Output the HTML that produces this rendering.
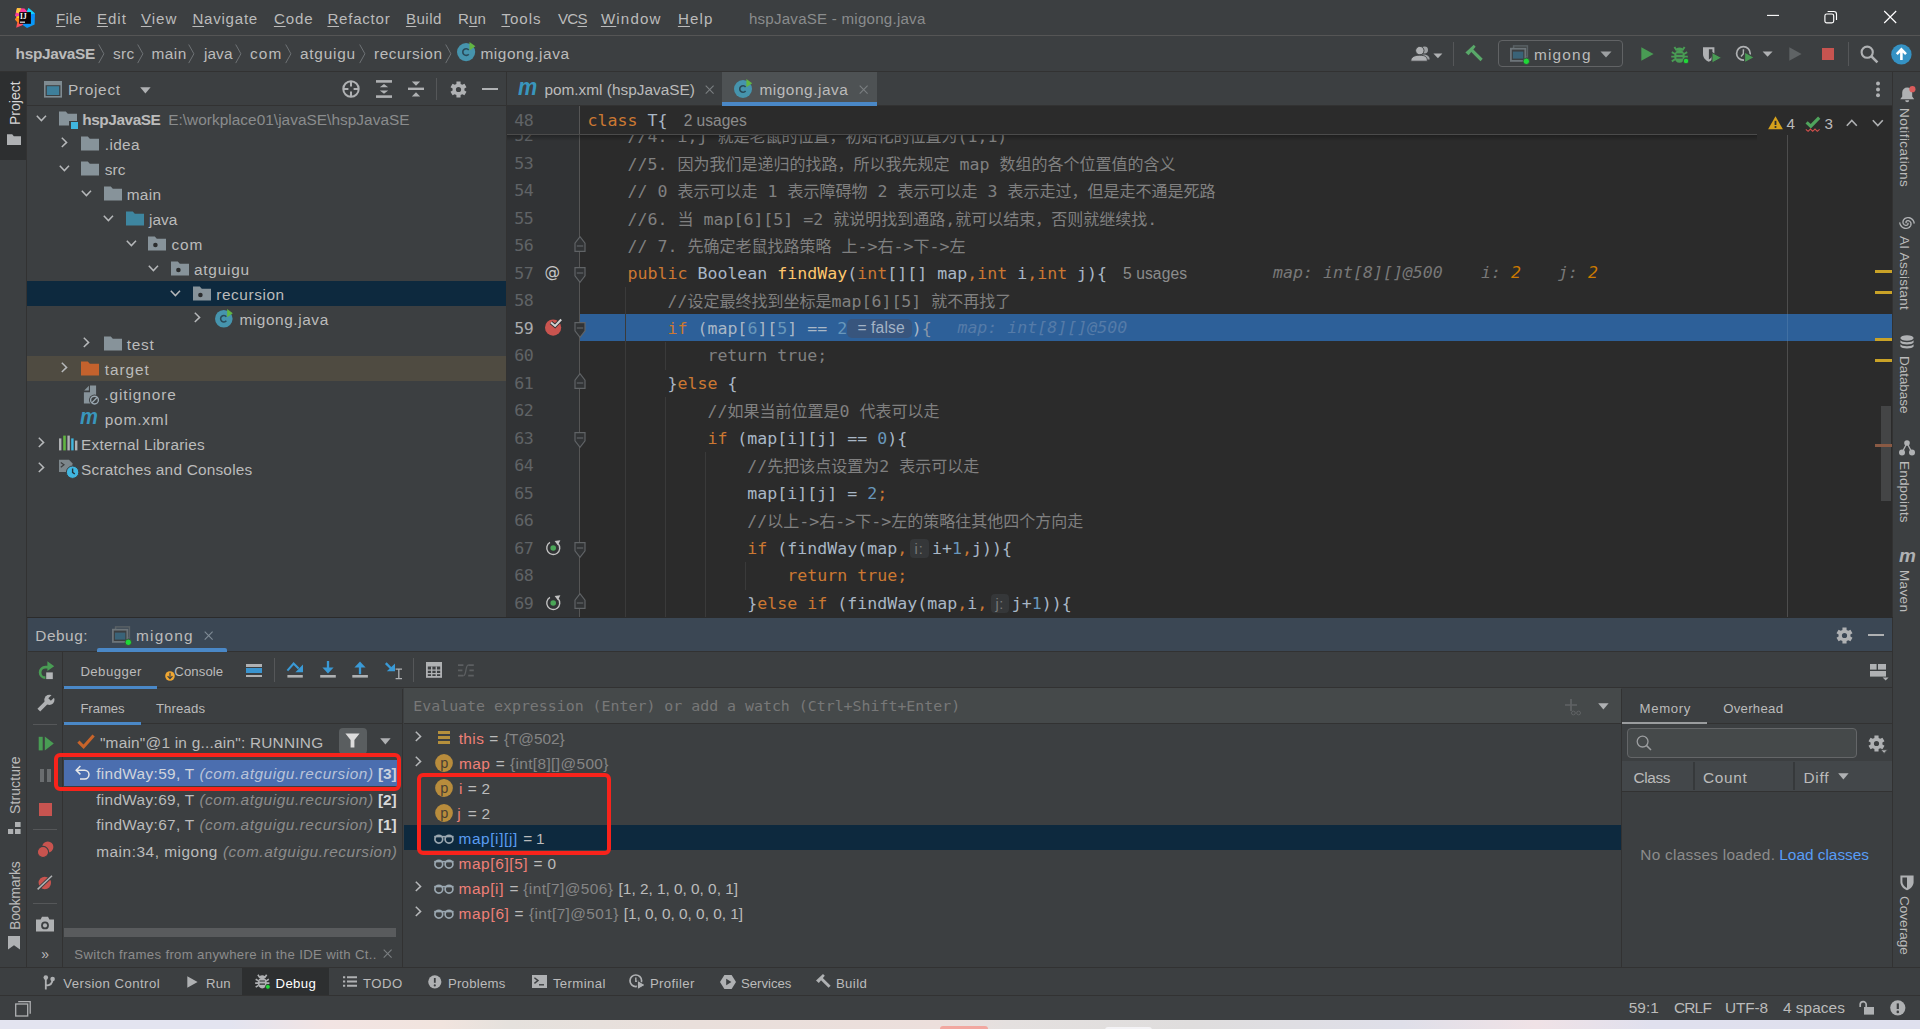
<!DOCTYPE html>
<html lang="zh"><head><meta charset="utf-8"><title>hspJavaSE - migong.java</title><style>
html,body{margin:0;padding:0;background:#3c3f41;}
#root{position:relative;width:1920px;height:1029px;overflow:hidden;background:#3c3f41;font-family:"Liberation Sans","Noto Sans CJK SC",sans-serif;}
.b{position:absolute;}
.t{position:absolute;white-space:pre;font-family:"Liberation Sans","Noto Sans CJK SC",sans-serif;}
.m{font-family:"DejaVu Sans Mono","Liberation Mono","Noto Sans CJK SC",monospace !important;}
.t u{text-decoration:underline;text-decoration-thickness:1px;text-underline-offset:2px;}
.i{position:absolute;overflow:visible;}
.cl{position:absolute;white-space:pre;font-family:"DejaVu Sans Mono","Liberation Mono","Noto Sans CJK SC",monospace;font-size:16.6px;line-height:27.5px;height:27.5px;color:#a9b7c6;left:587.5px;}
.cl .cj{font-size:16px;font-family:"Noto Sans CJK SC",sans-serif;}
.k{color:#cc7832} .n{color:#6897bb} .c{color:#808080} .f{color:#ffc66d} .d{color:#787878}
.ln{position:absolute;white-space:pre;font-family:"DejaVu Sans Mono","Liberation Mono","Noto Sans CJK SC",monospace;font-size:16.6px;line-height:27.5px;height:27.5px;color:#606366;left:514.2px;letter-spacing:-0.5px;}
</style></head><body><div id="root">
<div class="b" style="left:0px;top:35px;width:1920px;height:1px;background:#555555;"></div>
<svg class="i" style="left:14px;top:7px;" width="22" height="22" viewBox="14 7 22 22"><defs><linearGradient id="lgA" x1="0" y1="0" x2="0.3" y2="1"><stop offset="0" stop-color="#fe2d6c"/><stop offset=".45" stop-color="#f53fb0"/><stop offset=".7" stop-color="#fc6a2a"/><stop offset="1" stop-color="#fe3f7a"/></linearGradient><linearGradient id="lgB" x1="0.2" y1="0" x2="0.6" y2="1"><stop offset="0" stop-color="#14c9f8"/><stop offset=".4" stop-color="#0a86fa"/><stop offset="1" stop-color="#089cf6"/></linearGradient></defs>
<path d="M17 7.9L24.5 8.5L27.2 11.6L23.4 24.8L16.2 27.8L17.3 22L15 19.5L16.6 17.2L15 15.5Z" fill="url(#lgA)"/>
<path d="M17 7.9L21.2 8.2L19 13.6L15.9 12.6Z" fill="#fdc83c"/>
<path d="M15 19.5L17.2 16L19.4 16.6L19.4 22.4L17.3 22Z" fill="#fc8a1d"/><path d="M16.4 17.4L18.6 15.8L19.2 18.2Z" fill="#fbe41a"/>
<path d="M28.5 8L35 13.5L34.6 24.5L27 28L22.8 24.9L27 11.6Z" fill="url(#lgB)"/>
<path d="M28.5 8L35 13.5L31.4 14.2L27 11.6Z" fill="#13d4f9"/>
<rect x="19.2" y="12.1" width="11.7" height="11.7" fill="#0b0507"/><rect x="20" y="21.6" width="5" height="1.1" fill="#ffffff"/></svg>
<span class="t" style="left:19.9px;top:13.1px;font-family:'Liberation Serif',serif;font-weight:bold;font-size:7.4px;line-height:7.4px;color:#fff;letter-spacing:0.3px;">IJ</span>
<span class="t" id="t0" style="left:55.90px;top:11.22px;font-size:15.1px;line-height:15.1px;color:#bbbbbb;letter-spacing:0.375px;"><u>F</u>ile</span>
<span class="t" id="t1" style="left:96.90px;top:11.22px;font-size:15.1px;line-height:15.1px;color:#bbbbbb;letter-spacing:1.000px;"><u>E</u>dit</span>
<span class="t" id="t2" style="left:140.90px;top:11.22px;font-size:15.1px;line-height:15.1px;color:#bbbbbb;letter-spacing:1.000px;"><u>V</u>iew</span>
<span class="t" id="t3" style="left:192.40px;top:11.22px;font-size:15.1px;line-height:15.1px;color:#bbbbbb;letter-spacing:0.750px;"><u>N</u>avigate</span>
<span class="t" id="t4" style="left:273.90px;top:11.22px;font-size:15.1px;line-height:15.1px;color:#bbbbbb;letter-spacing:0.875px;"><u>C</u>ode</span>
<span class="t" id="t5" style="left:327.40px;top:11.22px;font-size:15.1px;line-height:15.1px;color:#bbbbbb;letter-spacing:0.750px;"><u>R</u>efactor</span>
<span class="t" id="t6" style="left:405.90px;top:11.22px;font-size:15.1px;line-height:15.1px;color:#bbbbbb;letter-spacing:0.500px;"><u>B</u>uild</span>
<span class="t" id="t7" style="left:457.90px;top:11.22px;font-size:15.1px;line-height:15.1px;color:#bbbbbb;letter-spacing:0.167px;">R<u>u</u>n</span>
<span class="t" id="t8" style="left:501.40px;top:11.22px;font-size:15.1px;line-height:15.1px;color:#bbbbbb;letter-spacing:1.000px;"><u>T</u>ools</span>
<span class="t" id="t9" style="left:557.90px;top:11.22px;font-size:15.1px;line-height:15.1px;color:#bbbbbb;letter-spacing:-0.667px;">VC<u>S</u></span>
<span class="t" id="t10" style="left:600.90px;top:11.22px;font-size:15.1px;line-height:15.1px;color:#bbbbbb;letter-spacing:1.167px;"><u>W</u>indow</span>
<span class="t" id="t11" style="left:677.90px;top:11.22px;font-size:15.1px;line-height:15.1px;color:#bbbbbb;letter-spacing:1.125px;"><u>H</u>elp</span>
<span class="t" id="t12" style="left:748.90px;top:11.22px;font-size:15.1px;line-height:15.1px;color:#8a8c8d;letter-spacing:0.239px;">hspJavaSE - migong.java</span>
<svg class="i" style="left:1767px;top:10px;" width="12" height="12" viewBox="0 0 12 12"><path d="M0 5.4H12" stroke="#ffffff" stroke-width="1.1" fill="none"/></svg>
<svg class="i" style="left:1824px;top:10px;" width="14" height="14" viewBox="0 0 14 14"><rect x="0.9" y="4" width="8.8" height="8.8" rx="1.8" fill="none" stroke="#ffffff" stroke-width="1.15"/><path d="M3.6 1.5H9.8a2.7 2.7 0 0 1 2.7 2.7V10" fill="none" stroke="#ffffff" stroke-width="1.15"/></svg>
<svg class="i" style="left:1883px;top:10px;" width="14" height="14" viewBox="0 0 14 14"><path d="M1.2 1L13.2 13M13.2 1L1.2 13" stroke="#ffffff" stroke-width="1.15" fill="none"/></svg>
<div class="b" style="left:0px;top:71px;width:1920px;height:1px;background:#323232;"></div>
<span class="t" id="t13" style="left:15.60px;top:45.96px;font-size:15.4px;line-height:15.4px;color:#bbbbbb;font-weight:bold;letter-spacing:-0.322px;">hspJavaSE</span>
<span class="t" id="t14" style="left:112.90px;top:45.96px;font-size:15.4px;line-height:15.4px;color:#bbbbbb;letter-spacing:0.333px;">src</span>
<span class="t" id="t15" style="left:151.40px;top:45.96px;font-size:15.4px;line-height:15.4px;color:#bbbbbb;letter-spacing:0.500px;">main</span>
<span class="t" id="t16" style="left:203.90px;top:45.96px;font-size:15.4px;line-height:15.4px;color:#bbbbbb;letter-spacing:0.125px;">java</span>
<span class="t" id="t17" style="left:249.90px;top:45.96px;font-size:15.4px;line-height:15.4px;color:#bbbbbb;letter-spacing:1.167px;">com</span>
<span class="t" id="t18" style="left:299.90px;top:45.96px;font-size:15.4px;line-height:15.4px;color:#bbbbbb;letter-spacing:0.786px;">atguigu</span>
<span class="t" id="t19" style="left:373.90px;top:45.96px;font-size:15.4px;line-height:15.4px;color:#bbbbbb;letter-spacing:0.611px;">recursion</span>
<span class="t" id="t20" style="left:480.40px;top:45.96px;font-size:15.4px;line-height:15.4px;color:#bbbbbb;letter-spacing:0.568px;">migong.java</span>
<svg class="i" style="left:98px;top:43.6px;" width="7" height="20" viewBox="0 0 7 20"><path d="M0.7 0.5L5.9 9.8L0.7 19.1" fill="none" stroke="#6e7275" stroke-width="1"/></svg>
<svg class="i" style="left:137px;top:43.6px;" width="7" height="20" viewBox="0 0 7 20"><path d="M0.7 0.5L5.9 9.8L0.7 19.1" fill="none" stroke="#6e7275" stroke-width="1"/></svg>
<svg class="i" style="left:188px;top:43.6px;" width="7" height="20" viewBox="0 0 7 20"><path d="M0.7 0.5L5.9 9.8L0.7 19.1" fill="none" stroke="#6e7275" stroke-width="1"/></svg>
<svg class="i" style="left:234.5px;top:43.6px;" width="7" height="20" viewBox="0 0 7 20"><path d="M0.7 0.5L5.9 9.8L0.7 19.1" fill="none" stroke="#6e7275" stroke-width="1"/></svg>
<svg class="i" style="left:284.5px;top:43.6px;" width="7" height="20" viewBox="0 0 7 20"><path d="M0.7 0.5L5.9 9.8L0.7 19.1" fill="none" stroke="#6e7275" stroke-width="1"/></svg>
<svg class="i" style="left:358.5px;top:43.6px;" width="7" height="20" viewBox="0 0 7 20"><path d="M0.7 0.5L5.9 9.8L0.7 19.1" fill="none" stroke="#6e7275" stroke-width="1"/></svg>
<svg class="i" style="left:444.5px;top:43.6px;" width="7" height="20" viewBox="0 0 7 20"><path d="M0.7 0.5L5.9 9.8L0.7 19.1" fill="none" stroke="#6e7275" stroke-width="1"/></svg>
<svg class="i" style="left:457.2px;top:43.3px;" width="18.2" height="18.2" viewBox="0 0 18 18"><circle cx="9" cy="9" r="9" fill="#4694ad"/><path d="M11.6 11.1a3.3 3.3 0 1 1 0-4.2" fill="none" stroke="#2a4a58" stroke-width="1.6"/><path d="M12.4 -1L18.2 3.3L12.4 7.3Z" fill="#62b543"/></svg>
<svg class="i" style="left:1411px;top:46px;" width="32" height="16" viewBox="0 0 32 16"><circle cx="13.6" cy="4" r="3.4" fill="#9da0a2"/><path d="M11 8.6C15.6 8.2 18.6 9.8 18.6 13.4H14Z" fill="#9da0a2"/><circle cx="8.8" cy="4.6" r="4.2" fill="#afb1b3" stroke="#3c3f41" stroke-width=".9"/><path d="M-0.2 15.2C-0.2 11 3.4 9.2 8.8 9.2S16.4 11 16.4 15.2Z" fill="#afb1b3" stroke="#3c3f41" stroke-width=".9"/><path d="M22.4 7.5h9L26.9 12.3Z" fill="#afb1b3"/></svg>
<div class="b" style="left:1453px;top:42px;width:1px;height:24px;background:#555759;"></div>
<svg class="i" style="left:1464px;top:45px;" width="19" height="18" viewBox="0 0 19 18"><path d="M7.2 4.6L17.6 15" stroke="#59a869" stroke-width="3.2" fill="none"/><path d="M1.4 7.6L9.8 -0.2L11.6 1.8L4.6 10.2Z" fill="#59a869"/></svg>
<div class="b" style="left:1498px;top:40px;width:125px;height:27px;background:transparent;border:1px solid #616365;border-radius:4px;box-sizing:border-box;"></div>
<svg class="i" style="left:1510px;top:45px;" width="20" height="20" viewBox="0 0 20 20"><rect x="3.6" y="0.9" width="13.8" height="11" fill="none" stroke="#5a6165" stroke-width="1.5"/><rect x="0.9" y="3.7" width="14.4" height="12.2" fill="#3c3f41" stroke="#6c7479" stroke-width="1.8"/><rect x="2.9" y="6.6" width="10.4" height="7" fill="#3a6378"/><circle cx="16.3" cy="16.3" r="3.2" fill="#1fd837" stroke="#3c3f41" stroke-width=".8"/></svg>
<span class="t" id="t21" style="left:1533.90px;top:47.26px;font-size:15.4px;line-height:15.4px;color:#bbbbbb;letter-spacing:1.217px;">migong</span>
<svg class="i" style="left:1600px;top:51px;" width="12" height="7" viewBox="0 0 12 7"><path d="M0.5 0.5h11L6 6.5Z" fill="#9da0a2"/></svg>
<svg class="i" style="left:1641px;top:47px;" width="13" height="14" viewBox="0 0 13 14"><path d="M0.3 0.2L12.6 7L0.3 13.8Z" fill="#499c54"/></svg>
<svg class="i" style="left:1671px;top:45.5px;" width="17.5" height="17.5" viewBox="0 0 17.5 17.5"><path d="M5.4 4L3.4 0.9M11.6 4L13.6 0.9M0.8 6.2L4 8M16.2 6.2L13 8M0.2 10.6H4M16.8 10.6H13M0.8 15.4L4 13.2M16.2 15.4L13 13.2" stroke="#499c54" stroke-width="1.9" fill="none"/><ellipse cx="8.5" cy="10.4" rx="5.3" ry="6.4" fill="#499c54"/><path d="M4.6 4.8a3.9 3.4 0 0 1 7.8 0Z" fill="#499c54"/><path d="M5.4 8.2H11.6M5.4 11.8H11.6" stroke="#3c3f41" stroke-width="1.3"/><circle cx="15" cy="15" r="2.8" fill="#1fd837" stroke="#3c3f41" stroke-width=".9"/></svg>
<svg class="i" style="left:1702px;top:46px;" width="20" height="17" viewBox="0 0 20 17"><path d="M1 1.2h11.4V8c0 4-3 6.6-5.7 7.8C4 14.6 1 12 1 8Z" fill="#afb1b3"/><path d="M6.9 3.2h3.5V8c0 2.4-1.4 4.2-3.5 5.4Z" fill="#3c3f41"/><path d="M10 6.5L19.6 11.7L10 17Z" fill="#499c54" stroke="#3c3f41" stroke-width="1"/></svg>
<svg class="i" style="left:1735px;top:45px;" width="38" height="18" viewBox="0 0 38 18"><circle cx="8.4" cy="8.4" r="6.8" fill="none" stroke="#afb1b3" stroke-width="1.7"/><path d="M8.4 4.2V8.8L6 11.4" fill="none" stroke="#afb1b3" stroke-width="1.5"/><path d="M9.6 7L19.4 12.4L9.6 17.8Z" fill="#499c54" stroke="#3c3f41" stroke-width="1.1"/><path d="M27.6 6.6h10L32.6 11.8Z" fill="#afb1b3"/></svg>
<svg class="i" style="left:1789px;top:47px;" width="13" height="14" viewBox="0 0 13 14"><path d="M0.3 0.2L12.6 7L0.3 13.8Z" fill="#5f6365"/></svg>
<div class="b" style="left:1821.5px;top:47.8px;width:12.7px;height:12.5px;background:#c75450;"></div>
<div class="b" style="left:1848px;top:42px;width:1px;height:24px;background:#555759;"></div>
<svg class="i" style="left:1860px;top:45px;" width="19" height="19" viewBox="0 0 19 19"><circle cx="7.2" cy="7.2" r="5.6" fill="none" stroke="#afb1b3" stroke-width="2.1"/><path d="M11.2 11.2L17.4 17.4" stroke="#afb1b3" stroke-width="2.6"/></svg>
<svg class="i" style="left:1890.5px;top:43.5px;" width="21" height="21" viewBox="0 0 21 21"><circle cx="10.4" cy="10.4" r="10.2" fill="#3592c4"/><path d="M10.4 16V7M5.8 10.2L10.4 5.4L15 10.2" fill="none" stroke="#fff" stroke-width="2.6"/></svg>
<div class="b" style="left:26px;top:72px;width:1px;height:895px;background:#323232;"></div>
<div class="b" style="left:0px;top:72px;width:26px;height:88px;background:#2d2f30;"></div>
<span class="t" id="t22" style="left:7.95px;top:125px;transform-origin:0 0;transform:rotate(-90deg);font-size:14px;line-height:14px;color:#d6d6d6;margin-top:0;letter-spacing:0.000px;">Project</span>
<svg class="i" style="left:7px;top:132.5px;" width="14" height="12" viewBox="0 0 14 12"><path d="M0 1.2h5.2l1.6 2H14V12H0Z" fill="#afb1b3"/></svg>
<span class="t" id="t23" style="left:7.95px;top:814.4px;transform-origin:0 0;transform:rotate(-90deg);font-size:14px;line-height:14px;color:#bbbbbb;margin-top:0;letter-spacing:0.100px;">Structure</span>
<svg class="i" style="left:8px;top:822px;" width="13" height="12" viewBox="0 0 13 12"><rect x="0" y="7" width="5.2" height="5" fill="#afb1b3"/><rect x="7" y="7" width="5.6" height="5" fill="#afb1b3"/><rect x="7" y="0" width="5.6" height="5" fill="#afb1b3"/></svg>
<span class="t" id="t24" style="left:7.95px;top:929.6px;transform-origin:0 0;transform:rotate(-90deg);font-size:14px;line-height:14px;color:#bbbbbb;margin-top:0;letter-spacing:-0.156px;">Bookmarks</span>
<svg class="i" style="left:8.3px;top:936px;" width="12" height="14" viewBox="0 0 12 14"><path d="M0 0h12v13.6L6 9.2L0 13.6Z" fill="#afb1b3"/></svg>
<div class="b" style="left:27px;top:105px;width:480px;height:1px;background:#323232;"></div>
<svg class="i" style="left:44px;top:81px;" width="18" height="17" viewBox="0 0 18 17"><rect x="0.8" y="0.8" width="16.4" height="15" fill="none" stroke="#7f8b91" stroke-width="1.6"/><rect x="0.8" y="0.8" width="16.4" height="3.4" fill="#7f8b91"/><rect x="2.8" y="5.2" width="12.4" height="8.8" fill="#3e7f9b"/></svg>
<span class="t" id="t25" style="left:67.90px;top:81.96px;font-size:15.4px;line-height:15.4px;color:#bbbbbb;letter-spacing:0.714px;">Project</span>
<svg class="i" style="left:140px;top:86.5px;" width="11" height="7" viewBox="0 0 11 7"><path d="M0.2 0.3h10.4L5.4 6.6Z" fill="#afb1b3"/></svg>
<svg class="i" style="left:342px;top:80px;" width="18" height="18" viewBox="0 0 18 18"><circle cx="9" cy="9" r="7.7" fill="none" stroke="#afb1b3" stroke-width="2"/><path d="M9 1V6.4M9 11.6V17M1 9H6.4M11.6 9H17" stroke="#afb1b3" stroke-width="2"/></svg>
<svg class="i" style="left:376px;top:80px;" width="16" height="18" viewBox="0 0 16 18"><rect x="0" y="0.1" width="16" height="2.6" fill="#afb1b3"/><rect x="0" y="15.3" width="16" height="2.6" fill="#afb1b3"/><path d="M8 3.9L12.2 7.2H3.8ZM8 13.8L12.2 10.5H3.8Z" fill="#afb1b3"/></svg>
<svg class="i" style="left:408px;top:80px;" width="16" height="18" viewBox="0 0 16 18"><rect x="0" y="7.6" width="16" height="2.4" fill="#afb1b3"/><path d="M8 5.8L12.2 1.4H3.8ZM8 12.2L12.2 16.6H3.8Z" fill="#afb1b3"/></svg>
<div class="b" style="left:436px;top:78px;width:1px;height:22px;background:#555759;"></div>
<svg class="i" style="left:449.5px;top:80.5px;" width="17" height="17" viewBox="0 0 17 17"><path fill="#afb1b3" fill-rule="evenodd" d="M6.39 2.88L6.45 0.46L10.55 0.46L10.61 2.88L12.31 3.86L14.44 2.70L16.49 6.26L14.42 7.52L14.42 9.48L16.49 10.74L14.44 14.30L12.31 13.14L10.61 14.12L10.55 16.54L6.45 16.54L6.39 14.12L4.69 13.14L2.56 14.30L0.51 10.74L2.58 9.48L2.58 7.52L0.51 6.26L2.56 2.70L4.69 3.86ZM5.90 8.50a2.6 2.6 0 1 0 5.2 0a2.6 2.6 0 1 0 -5.2 0Z"/></svg>
<div class="b" style="left:482px;top:87.7px;width:15.6px;height:2.4px;background:#afb1b3;"></div>
<div class="b" style="left:27px;top:281px;width:479px;height:25px;background:#0d293e;"></div>
<div class="b" style="left:27px;top:356px;width:479px;height:25px;background:#4f4b41;"></div>
<svg class="i" style="left:36.4px;top:114.5px;" width="11" height="7" viewBox="0 0 11 7"><path d="M0.8 0.8L5.4 5.6L10 0.8" fill="none" stroke="#b6b8ba" stroke-width="1.5"/></svg>
<svg class="i" style="left:59.0px;top:110.9px;" width="18" height="15" viewBox="0 0 18 15"><path d="M0 0.4h6.8l2 2.4H18V14.6H0Z" fill="#87939a"/></svg>
<div class="b" style="left:69.3px;top:120.6px;width:8.5px;height:8px;background:#3c3f41;"></div>
<div class="b" style="left:70.7px;top:122px;width:7.3px;height:6.6px;background:#40b6e0;"></div>
<span class="t" id="t26" style="left:82.30px;top:112.06px;font-size:15.4px;line-height:15.4px;color:#bbbbbb;font-weight:bold;letter-spacing:-0.444px;">hspJavaSE</span>
<svg class="i" style="left:60.5px;top:137.4px;" width="7" height="11" viewBox="0 0 7 11"><path d="M0.8 0.8L5.6 5.4L0.8 10" fill="none" stroke="#b6b8ba" stroke-width="1.5"/></svg>
<svg class="i" style="left:81.3px;top:136.4px;" width="18" height="15" viewBox="0 0 18 15"><path d="M0 0.4h6.8l2 2.4H18V14.6H0Z" fill="#87939a"/></svg>
<span class="t" id="t27" style="left:104.80px;top:137.06px;font-size:15.4px;line-height:15.4px;color:#bbbbbb;letter-spacing:0.340px;">.idea</span>
<svg class="i" style="left:58.699999999999996px;top:164.5px;" width="11" height="7" viewBox="0 0 11 7"><path d="M0.8 0.8L5.4 5.6L10 0.8" fill="none" stroke="#b6b8ba" stroke-width="1.5"/></svg>
<svg class="i" style="left:81.3px;top:161.4px;" width="18" height="15" viewBox="0 0 18 15"><path d="M0 0.4h6.8l2 2.4H18V14.6H0Z" fill="#87939a"/></svg>
<span class="t" id="t28" style="left:104.80px;top:162.06px;font-size:15.4px;line-height:15.4px;color:#bbbbbb;letter-spacing:0.033px;">src</span>
<svg class="i" style="left:81.0px;top:189.5px;" width="11" height="7" viewBox="0 0 11 7"><path d="M0.8 0.8L5.4 5.6L10 0.8" fill="none" stroke="#b6b8ba" stroke-width="1.5"/></svg>
<svg class="i" style="left:103.6px;top:186.4px;" width="18" height="15" viewBox="0 0 18 15"><path d="M0 0.4h6.8l2 2.4H18V14.6H0Z" fill="#87939a"/></svg>
<span class="t" id="t29" style="left:126.70px;top:187.06px;font-size:15.4px;line-height:15.4px;color:#bbbbbb;letter-spacing:0.300px;">main</span>
<svg class="i" style="left:103.30000000000001px;top:214.5px;" width="11" height="7" viewBox="0 0 11 7"><path d="M0.8 0.8L5.4 5.6L10 0.8" fill="none" stroke="#b6b8ba" stroke-width="1.5"/></svg>
<svg class="i" style="left:125.9px;top:211.4px;" width="18" height="15" viewBox="0 0 18 15"><path d="M0 0.4h6.8l2 2.4H18V14.6H0Z" fill="#3e86a0"/></svg>
<span class="t" id="t30" style="left:148.90px;top:212.06px;font-size:15.4px;line-height:15.4px;color:#bbbbbb;letter-spacing:0.100px;">java</span>
<svg class="i" style="left:125.60000000000001px;top:239.5px;" width="11" height="7" viewBox="0 0 11 7"><path d="M0.8 0.8L5.4 5.6L10 0.8" fill="none" stroke="#b6b8ba" stroke-width="1.5"/></svg>
<svg class="i" style="left:148.2px;top:236.4px;" width="18" height="15" viewBox="0 0 18 15"><path d="M0 0.4h6.8l2 2.4H18V14.6H0Z" fill="#87939a"/><circle cx="7.4" cy="9" r="2.3" fill="#2b2d2e"/></svg>
<span class="t" id="t31" style="left:171.50px;top:237.06px;font-size:15.4px;line-height:15.4px;color:#bbbbbb;letter-spacing:0.867px;">com</span>
<svg class="i" style="left:147.9px;top:264.5px;" width="11" height="7" viewBox="0 0 11 7"><path d="M0.8 0.8L5.4 5.6L10 0.8" fill="none" stroke="#b6b8ba" stroke-width="1.5"/></svg>
<svg class="i" style="left:170.5px;top:261.4px;" width="18" height="15" viewBox="0 0 18 15"><path d="M0 0.4h6.8l2 2.4H18V14.6H0Z" fill="#87939a"/><circle cx="7.4" cy="9" r="2.3" fill="#2b2d2e"/></svg>
<span class="t" id="t32" style="left:193.90px;top:262.06px;font-size:15.4px;line-height:15.4px;color:#bbbbbb;letter-spacing:0.786px;">atguigu</span>
<svg class="i" style="left:170.20000000000002px;top:289.5px;" width="11" height="7" viewBox="0 0 11 7"><path d="M0.8 0.8L5.4 5.6L10 0.8" fill="none" stroke="#b6b8ba" stroke-width="1.5"/></svg>
<svg class="i" style="left:192.8px;top:286.4px;" width="18" height="15" viewBox="0 0 18 15"><path d="M0 0.4h6.8l2 2.4H18V14.6H0Z" fill="#87939a"/><circle cx="7.4" cy="9" r="2.3" fill="#2b2d2e"/></svg>
<span class="t" id="t33" style="left:216.20px;top:287.06px;font-size:15.4px;line-height:15.4px;color:#bbbbbb;letter-spacing:0.578px;">recursion</span>
<svg class="i" style="left:194.29999999999998px;top:312.4px;" width="7" height="11" viewBox="0 0 7 11"><path d="M0.8 0.8L5.6 5.4L0.8 10" fill="none" stroke="#b6b8ba" stroke-width="1.5"/></svg>
<svg class="i" style="left:215.4px;top:309.8px;" width="17.6" height="17.6" viewBox="0 0 18 18"><circle cx="9" cy="9" r="9" fill="#4694ad"/><path d="M11.6 11.1a3.3 3.3 0 1 1 0-4.2" fill="none" stroke="#2a4a58" stroke-width="1.6"/><path d="M12.4 -1L18.2 3.3L12.4 7.3Z" fill="#62b543"/></svg>
<span class="t" id="t34" style="left:239.40px;top:312.06px;font-size:15.4px;line-height:15.4px;color:#bbbbbb;letter-spacing:0.582px;">migong.java</span>
<svg class="i" style="left:82.8px;top:337.4px;" width="7" height="11" viewBox="0 0 7 11"><path d="M0.8 0.8L5.6 5.4L0.8 10" fill="none" stroke="#b6b8ba" stroke-width="1.5"/></svg>
<svg class="i" style="left:103.6px;top:336.4px;" width="18" height="15" viewBox="0 0 18 15"><path d="M0 0.4h6.8l2 2.4H18V14.6H0Z" fill="#87939a"/></svg>
<span class="t" id="t35" style="left:126.70px;top:337.06px;font-size:15.4px;line-height:15.4px;color:#bbbbbb;letter-spacing:0.725px;">test</span>
<svg class="i" style="left:60.5px;top:362.4px;" width="7" height="11" viewBox="0 0 7 11"><path d="M0.8 0.8L5.6 5.4L0.8 10" fill="none" stroke="#b6b8ba" stroke-width="1.5"/></svg>
<svg class="i" style="left:81.3px;top:361.4px;" width="18" height="15" viewBox="0 0 18 15"><path d="M0 0.4h6.8l2 2.4H18V14.6H0Z" fill="#c4622d"/></svg>
<span class="t" id="t36" style="left:104.70px;top:362.06px;font-size:15.4px;line-height:15.4px;color:#bbbbbb;letter-spacing:0.950px;">target</span>
<svg class="i" style="left:83.3px;top:384.5px;" width="16" height="20" viewBox="0 0 16 20"><path d="M7 0.4H13.1V18.4H0.9V7.2H7Z" fill="#87939a"/><path d="M1.2 5.4L5.9 0.8V5.4Z" fill="#87939a"/><circle cx="11.5" cy="15.1" r="5.5" fill="#3c3f41"/><circle cx="11.5" cy="15.1" r="3.9" fill="none" stroke="#9aa7b0" stroke-width="1.35"/><path d="M8.9 17.7L14.1 12.5" stroke="#9aa7b0" stroke-width="1.3"/></svg>
<span class="t" id="t37" style="left:104.20px;top:387.06px;font-size:15.4px;line-height:15.4px;color:#bbbbbb;letter-spacing:0.930px;">.gitignore</span>
<span class="t" style="left:80.1px;top:407.09px;font-size:21.39px;line-height:21.39px;color:#3996bd;font-weight:bold;font-style:italic;transform-origin:0 0;transform:scaleX(0.94);">m</span>
<span class="t" id="t38" style="left:104.70px;top:412.06px;font-size:15.4px;line-height:15.4px;color:#bbbbbb;letter-spacing:0.843px;">pom.xml</span>
<svg class="i" style="left:38.2px;top:437.4px;" width="7" height="11" viewBox="0 0 7 11"><path d="M0.8 0.8L5.6 5.4L0.8 10" fill="none" stroke="#b6b8ba" stroke-width="1.5"/></svg>
<svg class="i" style="left:58.6px;top:435px;" width="19" height="16" viewBox="0 0 19 16"><rect x="0" y="3.4" width="2.4" height="12" fill="#afb1b3"/><rect x="4.2" y="0.6" width="2.6" height="14.8" fill="#62b543"/><rect x="8.4" y="0.6" width="2.4" height="14.8" fill="#afb1b3"/><rect x="12.2" y="3.4" width="2.4" height="12" fill="#40b6e0"/><rect x="16" y="5.6" width="2.4" height="9.8" fill="#afb1b3"/></svg>
<span class="t" id="t39" style="left:81.10px;top:437.06px;font-size:15.4px;line-height:15.4px;color:#bbbbbb;letter-spacing:0.228px;">External Libraries</span>
<svg class="i" style="left:38.2px;top:462.4px;" width="7" height="11" viewBox="0 0 7 11"><path d="M0.8 0.8L5.6 5.4L0.8 10" fill="none" stroke="#b6b8ba" stroke-width="1.5"/></svg>
<svg class="i" style="left:58.6px;top:459px;" width="20" height="20" viewBox="0 0 20 20"><path d="M0 0.8H10l3.4 3.4V13H0Z" fill="#7d878c"/><path d="M1.8 3.4L5 5.8L1.8 8.2" fill="none" stroke="#3c3f41" stroke-width="1.2"/><circle cx="13.6" cy="13.2" r="6.2" fill="#40b6e0" stroke="#3c3f41" stroke-width="1"/><path d="M13.6 9.6V13.4L15.8 15" fill="none" stroke="#23323a" stroke-width="1.4"/></svg>
<span class="t" id="t40" style="left:81.10px;top:462.06px;font-size:15.4px;line-height:15.4px;color:#bbbbbb;letter-spacing:0.205px;">Scratches and Consoles</span>
<span class="t" id="t41" style="left:168.20px;top:112.06px;font-size:15.4px;line-height:15.4px;color:#8a8c8d;letter-spacing:0.032px;">E:\workplace01\javaSE\hspJavaSE</span>
<div class="b" style="left:506px;top:72px;width:1px;height:546px;background:#323232;"></div>
<div class="b" style="left:507px;top:105px;width:1386px;height:1px;background:#323232;"></div>
<div class="b" style="left:722px;top:72px;width:155px;height:34px;background:#4e5254;"></div>
<div class="b" style="left:722px;top:102px;width:155px;height:4px;background:#4a88c7;"></div>
<span class="t" style="left:517.5px;top:75.53px;font-size:23.0px;line-height:23.0px;color:#3996bd;font-weight:bold;font-style:italic;transform-origin:0 0;transform:scaleX(0.94);">m</span>
<span class="t" id="t42" style="left:544.40px;top:81.96px;font-size:15.4px;line-height:15.4px;color:#bbbbbb;letter-spacing:0.000px;">pom.xml (hspJavaSE)</span>
<svg class="i" style="left:704.5px;top:84.5px;" width="10" height="10" viewBox="0 0 10 10"><path d="M0.7 0.7L8.6 8.6M8.6 0.7L0.7 8.6" stroke="#7a7e80" stroke-width="1.1" fill="none"/></svg>
<svg class="i" style="left:734px;top:80px;" width="18" height="18" viewBox="0 0 18 18"><circle cx="9" cy="9" r="9" fill="#4694ad"/><path d="M11.6 11.1a3.3 3.3 0 1 1 0-4.2" fill="none" stroke="#2a4a58" stroke-width="1.6"/><path d="M12.4 -1L18.2 3.3L12.4 7.3Z" fill="#62b543"/></svg>
<span class="t" id="t43" style="left:759.40px;top:81.96px;font-size:15.4px;line-height:15.4px;color:#bbbbbb;letter-spacing:0.545px;">migong.java</span>
<svg class="i" style="left:858.5px;top:84.5px;" width="10" height="10" viewBox="0 0 10 10"><path d="M0.7 0.7L8.6 8.6M8.6 0.7L0.7 8.6" stroke="#7a7e80" stroke-width="1.1" fill="none"/></svg>
<svg class="i" style="left:1875px;top:80.5px;" width="6" height="17" viewBox="0 0 6 17"><circle cx="3" cy="2.6" r="2" fill="#afb1b3"/><circle cx="3" cy="8.5" r="2" fill="#afb1b3"/><circle cx="3" cy="14.3" r="2" fill="#afb1b3"/></svg>
<div class="b" style="left:1892px;top:72px;width:1px;height:895px;background:#323232;"></div>
<svg class="i" style="left:1899.5px;top:86px;" width="16" height="17" viewBox="0 0 16 17"><path d="M7.2 1.6a5 5 0 0 1 5 5V10.6l2 2.6H0.2l2-2.6V6.6a5 5 0 0 1 5-5Z" fill="#afb1b3"/><path d="M5.2 14.2h4a2 2 0 0 1-4 0Z" fill="#afb1b3"/><circle cx="12.4" cy="3.2" r="3.1" fill="#db5c5c"/></svg>
<span class="t" id="t44" style="left:1911.01px;top:107.8px;transform-origin:0 0;transform:rotate(90deg);font-size:13.6px;line-height:13.6px;color:#bbbbbb;margin-top:0;letter-spacing:0.392px;">Notifications</span>
<svg class="i" style="left:1899.7px;top:216px;" width="14" height="14" viewBox="0 0 14 14"><path d="M7.90 7.28L7.98 7.47L8.03 7.69L8.02 7.93L7.96 8.18L7.84 8.43L7.66 8.67L7.43 8.89L7.14 9.08L6.80 9.22L6.42 9.31L6.01 9.34L5.57 9.30L5.13 9.18L4.70 9.00L4.28 8.73L3.90 8.39L3.57 7.98L3.30 7.50L3.11 6.97L3.01 6.40L3.00 5.79L3.09 5.18L3.29 4.56L3.60 3.96L4.02 3.40L4.54 2.89L5.15 2.45L5.85 2.09L6.62 1.84L7.44 1.69L8.30 1.67L9.17 1.77L10.04 2.01L10.88 2.38L11.67 2.88L12.39 3.51L13.02 4.25L13.53 5.09L13.91 6.01L14.14 7.00M6.10 6.72L6.02 6.53L5.97 6.31L5.98 6.07L6.04 5.82L6.16 5.57L6.34 5.33L6.57 5.11L6.86 4.92L7.20 4.78L7.58 4.69L7.99 4.66L8.43 4.70L8.87 4.82L9.30 5.00L9.72 5.27L10.10 5.61L10.43 6.02L10.70 6.50L10.89 7.03L10.99 7.60L11.00 8.21L10.91 8.82L10.71 9.44L10.40 10.04L9.98 10.60L9.46 11.11L8.85 11.55L8.15 11.91L7.38 12.16L6.56 12.31L5.70 12.33L4.83 12.23L3.96 11.99L3.12 11.62L2.33 11.12L1.61 10.49L0.98 9.75L0.47 8.91L0.09 7.99L-0.14 7.00" fill="none" stroke="#afb1b3" stroke-width="1.35" stroke-linecap="round"/></svg>
<span class="t" id="t45" style="left:1911.01px;top:235.6px;transform-origin:0 0;transform:rotate(90deg);font-size:13.6px;line-height:13.6px;color:#bbbbbb;margin-top:0;letter-spacing:0.242px;">AI Assistant</span>
<svg class="i" style="left:1899.5px;top:334.8px;" width="14" height="15.5" viewBox="0 0 14 15.5"><ellipse cx="7" cy="3" rx="6.6" ry="2.8" fill="#afb1b3"/><path d="M0.4 5.2c1 2.6 12.2 2.6 13.2 0V7.6c-1 2.6-12.2 2.6-13.2 0ZM0.4 9.2c1 2.6 12.2 2.6 13.2 0v2.4c-1 2.6-12.2 2.6-13.2 0Z" fill="#afb1b3"/></svg>
<span class="t" id="t46" style="left:1911.01px;top:356.4px;transform-origin:0 0;transform:rotate(90deg);font-size:13.6px;line-height:13.6px;color:#bbbbbb;margin-top:0;letter-spacing:-0.087px;">Database</span>
<svg class="i" style="left:1898.5px;top:440px;" width="16" height="16" viewBox="0 0 16 16"><circle cx="8" cy="3" r="2.8" fill="#afb1b3"/><circle cx="3" cy="12.6" r="3" fill="#afb1b3"/><circle cx="13" cy="12.6" r="3" fill="#afb1b3"/><path d="M8 3L3 12.6M8 3L13 12.6" stroke="#afb1b3" stroke-width="1.3"/></svg>
<span class="t" id="t47" style="left:1911.01px;top:461.4px;transform-origin:0 0;transform:rotate(90deg);font-size:13.6px;line-height:13.6px;color:#bbbbbb;margin-top:0;letter-spacing:0.144px;">Endpoints</span>
<span class="t" id="t48" style="left:1898.90px;top:545.92px;font-size:19px;line-height:19px;color:#afb1b3;font-weight:bold;font-style:italic;">m</span>
<span class="t" id="t49" style="left:1911.01px;top:570px;transform-origin:0 0;transform:rotate(90deg);font-size:13.6px;line-height:13.6px;color:#bbbbbb;margin-top:0;letter-spacing:0.300px;">Maven</span>
<svg class="i" style="left:1900px;top:875px;" width="14" height="15.5" viewBox="0 0 14 15.5"><path d="M0.4 0.6H13.6V7c0 4-3.4 7-6.6 8.2C3.8 14 .4 11 .4 7Z" fill="#afb1b3"/><path d="M7 2.6V13C4.6 11.8 2.4 9.6 2.4 7V2.6Z" fill="#3c3f41"/></svg>
<span class="t" id="t50" style="left:1911.01px;top:896px;transform-origin:0 0;transform:rotate(90deg);font-size:13.6px;line-height:13.6px;color:#bbbbbb;margin-top:0;letter-spacing:-0.025px;">Coverage</span>
<div class="b" style="left:507px;top:106px;width:1385px;height:512px;background:#2b2b2b;"></div>
<div class="b" style="left:507px;top:106px;width:72.5px;height:512px;background:#313335;"></div>
<div class="b" style="left:579px;top:106px;width:1px;height:512px;background:#555555;"></div>
<div class="b" style="left:1787px;top:135px;width:1px;height:483px;background:#4d4d4d;"></div>
<div class="b" style="left:625px;top:287.2px;width:1px;height:330.8px;background:#3a3a3a;"></div>
<div class="b" style="left:665px;top:342.2px;width:1px;height:27.5px;background:#3a3a3a;"></div>
<div class="b" style="left:665px;top:397.2px;width:1px;height:220.8px;background:#3a3a3a;"></div>
<div class="b" style="left:705px;top:452.2px;width:1px;height:165.8px;background:#3a3a3a;"></div>
<div class="b" style="left:745px;top:562.2px;width:1px;height:27.5px;background:#3a3a3a;"></div>
<div class="b" style="left:580px;top:314px;width:1312px;height:27px;background:#2d6099;"></div>
<div class="b" style="left:625px;top:314px;width:1px;height:27px;background:#3a3a3a;"></div>
<div class="b" style="left:1787px;top:314px;width:1px;height:27px;background:#4170a3;"></div>
<div class="ln" style="top:122.20px;">52</div>
<div class="cl" style="top:122.20px;">    <span class="c">//4. i,j <span class="cj">就是老鼠的位置，初始化的位置为</span>(1,1)</span></div>
<div class="b" style="left:580px;top:106px;width:1177px;height:28.5px;background:#2b2b2b;"></div>
<div class="b" style="left:507px;top:106px;width:72px;height:28.5px;background:#313335;"></div>
<div class="b" style="left:579px;top:106px;width:1px;height:29px;background:#555555;"></div>
<div class="b" style="left:1757px;top:106px;width:135px;height:29px;background:#2b2b2b;"></div>
<div class="b" style="left:507px;top:134px;width:1250px;height:1px;background:#4b4b4b;"></div>
<div class="b" style="left:507px;top:135px;width:1250px;height:6px;background:transparent;background:linear-gradient(180deg,rgba(0,0,0,.28),rgba(0,0,0,0));"></div>
<div class="ln" style="top:107.20px;">48</div>
<div class="cl" style="top:107.20px;"><span class="k">class</span> T{</div>
<span class="t" id="t51" style="left:683.70px;top:113.09px;font-size:15.6px;line-height:15.6px;color:#8c8c8c;letter-spacing:-0.037px;">2 usages</span>
<div class="ln" style="top:149.70px;">53</div>
<div class="ln" style="top:177.20px;">54</div>
<div class="ln" style="top:204.70px;">55</div>
<div class="ln" style="top:232.20px;">56</div>
<div class="ln" style="top:259.70px;">57</div>
<div class="ln" style="top:287.20px;">58</div>
<div class="ln" style="top:314.70px;color:#a9abad;">59</div>
<div class="ln" style="top:342.20px;">60</div>
<div class="ln" style="top:369.70px;">61</div>
<div class="ln" style="top:397.20px;">62</div>
<div class="ln" style="top:424.70px;">63</div>
<div class="ln" style="top:452.20px;">64</div>
<div class="ln" style="top:479.70px;">65</div>
<div class="ln" style="top:507.20px;">66</div>
<div class="ln" style="top:534.70px;">67</div>
<div class="ln" style="top:562.20px;">68</div>
<div class="ln" style="top:589.70px;">69</div>
<div class="cl" style="top:149.70px;">    <span class="c">//5. <span class="cj">因为我们是递归的找路，所以我先规定</span> map <span class="cj">数组的各个位置值的含义</span></span></div>
<div class="cl" style="top:177.20px;">    <span class="c">// 0 <span class="cj">表示可以走</span> 1 <span class="cj">表示障碍物</span> 2 <span class="cj">表示可以走</span> 3 <span class="cj">表示走过，但是走不通是死路</span></span></div>
<div class="cl" style="top:204.70px;">    <span class="c">//6. <span class="cj">当</span> map[6][5] =2 <span class="cj">就说明找到通路</span>,<span class="cj">就可以结束，否则就继续找</span>.</span></div>
<div class="cl" style="top:232.20px;">    <span class="c">// 7. <span class="cj">先确定老鼠找路策略</span> <span class="cj">上</span>-&gt;<span class="cj">右</span>-&gt;<span class="cj">下</span>-&gt;<span class="cj">左</span></span></div>
<div class="cl" style="top:259.70px;">    <span class="k">public</span> Boolean <span class="f">findWay</span>(<span class="k">int</span>[][] map<span class="k">,int</span> i<span class="k">,int</span> j){</div>
<span class="t" id="t52" style="left:1122.90px;top:265.59px;font-size:15.6px;line-height:15.6px;color:#8c8c8c;letter-spacing:0.125px;">5 usages</span>
<span class="t m" style="left:1273px;top:264.76px;font-size:16.6px;line-height:16.6px;font-style:italic;color:#787878;">map: int[8][]@500</span>
<span class="t m" style="left:1481px;top:264.76px;font-size:16.6px;line-height:16.6px;font-style:italic;color:#787878;">i: </span>
<span class="t m" style="left:1511px;top:264.76px;font-size:16.6px;line-height:16.6px;font-style:italic;color:#cc7a00;">2</span>
<span class="t m" style="left:1558px;top:264.76px;font-size:16.6px;line-height:16.6px;font-style:italic;color:#787878;">j: </span>
<span class="t m" style="left:1588px;top:264.76px;font-size:16.6px;line-height:16.6px;font-style:italic;color:#cc7a00;">2</span>
<div class="cl" style="top:287.20px;">        <span class="c">//<span class="cj">设定最终找到坐标是</span>map[6][5] <span class="cj">就不再找了</span></span></div>
<div class="cl" style="top:314.70px;">        <span class="k">if</span> (map[<span class="n">6</span>][<span class="n">5</span>] == <span class="n">2</span></div>
<div class="b" style="left:847px;top:318.5px;width:65px;height:19px;background:#38557d;border-radius:5px;"></div>
<span class="t" id="t53" style="left:857.40px;top:320.39px;font-size:15.6px;line-height:15.6px;color:#a3b3c6;letter-spacing:0.143px;">= false</span>
<div class="cl" style="top:314.70px;left:911.7px;">)<span style="color:#8796a8">{</span></div>
<span class="t m" style="left:957.4px;top:319.76px;font-size:16.6px;line-height:16.6px;font-style:italic;color:#557ba8;">map: int[8][]@500</span>
<div class="cl" style="top:342.20px;">            <span class="c">return true;</span></div>
<div class="cl" style="top:369.70px;">        }<span class="k">else</span> {</div>
<div class="cl" style="top:397.20px;">            <span class="c">//<span class="cj">如果当前位置是</span>0 <span class="cj">代表可以走</span></span></div>
<div class="cl" style="top:424.70px;">            <span class="k">if</span> (map[i][j] == <span class="n">0</span>){</div>
<div class="cl" style="top:452.20px;">                <span class="c">//<span class="cj">先把该点设置为</span>2 <span class="cj">表示可以走</span></span></div>
<div class="cl" style="top:479.70px;">                map[i][j] = <span class="n">2</span><span class="k">;</span></div>
<div class="cl" style="top:507.20px;">                <span class="c">//<span class="cj">以上</span>-&gt;<span class="cj">右</span>-&gt;<span class="cj">下</span>-&gt;<span class="cj">左的策略往其他四个方向走</span></span></div>
<div class="cl" style="top:534.70px;">                <span class="k">if</span> (findWay(map<span class="k">,</span></div>
<div class="b" style="left:909.5px;top:539.2px;width:19px;height:19px;background:#353739;border-radius:4px;"></div>
<span class="t" id="t54" style="left:914.40px;top:541.63px;font-size:14.5px;line-height:14.5px;color:#787878;letter-spacing:1.250px;">i:</span>
<div class="cl" style="top:534.70px;left:932px;">i+<span class="n">1</span><span class="k">,</span>j)){</div>
<div class="cl" style="top:562.20px;">                    <span class="k">return true;</span></div>
<div class="cl" style="top:589.70px;">                }<span class="k">else if</span> (findWay(map<span class="k">,</span>i<span class="k">,</span></div>
<div class="b" style="left:990.5px;top:594.2px;width:18px;height:19px;background:#353739;border-radius:4px;"></div>
<span class="t" id="t55" style="left:995.40px;top:596.63px;font-size:14.5px;line-height:14.5px;color:#787878;letter-spacing:0.750px;">j:</span>
<div class="cl" style="top:589.70px;left:1011.8px;">j+<span class="n">1</span>)){</div>
<span class="t" style="left:544.4px;top:264.8px;font-family:'DejaVu Sans',sans-serif;font-size:15.6px;line-height:15.6px;color:#c6c6c6;">@</span>
<svg class="i" style="left:544.6px;top:319px;" width="17" height="17" viewBox="0 0 17 17"><circle cx="8.1" cy="8.6" r="8.1" fill="#c9544f"/><path d="M6 3.5L10.1 6.9L16.2 0.5" fill="none" stroke="#313335" stroke-width="3.8"/><path d="M6 3.5L10.1 6.9L16.2 0.5" fill="none" stroke="#d4d4d4" stroke-width="2"/></svg>
<svg class="i" style="left:544.5px;top:539.0px;" width="17" height="18" viewBox="0 0 17 18"><path d="M4.95 3.4A6.5 6.5 0 1 0 13.2 4.8" fill="none" stroke="#c2c2c2" stroke-width="1.4"/><path d="M9.6 2L15.4 1.3L12.8 6.2Z" fill="#c2c2c2"/><circle cx="8.2" cy="9" r="2.8" fill="#4aa657"/></svg>
<svg class="i" style="left:544.5px;top:594.0px;" width="17" height="18" viewBox="0 0 17 18"><path d="M4.95 3.4A6.5 6.5 0 1 0 13.2 4.8" fill="none" stroke="#c2c2c2" stroke-width="1.4"/><path d="M9.6 2L15.4 1.3L12.8 6.2Z" fill="#c2c2c2"/><circle cx="8.2" cy="9" r="2.8" fill="#4aa657"/></svg>
<svg class="i" style="left:574px;top:235.79999999999998px;" width="12" height="16" viewBox="0 0 12 16"><path d="M1 15.4V7.1L6 0.7L11 7.1V15.4Z" fill="#313335" stroke="#606366" stroke-width="1.2"/><path d="M2.8 10H9.2" stroke="#606366" stroke-width="1.2"/></svg>
<svg class="i" style="left:574px;top:267.3px;" width="12" height="16" viewBox="0 0 12 16"><path d="M1 0.6H11V8.9L6 15.3L1 8.9Z" fill="#313335" stroke="#606366" stroke-width="1.2"/><path d="M2.8 6H9.2" stroke="#606366" stroke-width="1.2"/></svg>
<svg class="i" style="left:574px;top:322.3px;" width="12" height="16" viewBox="0 0 12 16"><path d="M1 0.6H11V8.9L6 15.3L1 8.9Z" fill="#313335" stroke="#606366" stroke-width="1.2"/><path d="M2.8 6H9.2" stroke="#606366" stroke-width="1.2"/></svg>
<svg class="i" style="left:574px;top:373.3px;" width="12" height="16" viewBox="0 0 12 16"><path d="M1 15.4V7.1L6 0.7L11 7.1V15.4Z" fill="#313335" stroke="#606366" stroke-width="1.2"/><path d="M2.8 10H9.2" stroke="#606366" stroke-width="1.2"/></svg>
<svg class="i" style="left:574px;top:432.3px;" width="12" height="16" viewBox="0 0 12 16"><path d="M1 0.6H11V8.9L6 15.3L1 8.9Z" fill="#313335" stroke="#606366" stroke-width="1.2"/><path d="M2.8 6H9.2" stroke="#606366" stroke-width="1.2"/></svg>
<svg class="i" style="left:574px;top:542.3000000000001px;" width="12" height="16" viewBox="0 0 12 16"><path d="M1 0.6H11V8.9L6 15.3L1 8.9Z" fill="#313335" stroke="#606366" stroke-width="1.2"/><path d="M2.8 6H9.2" stroke="#606366" stroke-width="1.2"/></svg>
<svg class="i" style="left:574px;top:593.3000000000001px;" width="12" height="16" viewBox="0 0 12 16"><path d="M1 15.4V7.1L6 0.7L11 7.1V15.4Z" fill="#313335" stroke="#606366" stroke-width="1.2"/><path d="M2.8 10H9.2" stroke="#606366" stroke-width="1.2"/></svg>
<svg class="i" style="left:1767.5px;top:115.8px;" width="15" height="13.5" viewBox="0 0 15 13.5"><path d="M7.5 0.3L14.9 13.3H0.1Z" fill="#d5a11c"/><path d="M7.5 4.8V9" stroke="#2b2b2b" stroke-width="1.8"/><circle cx="7.5" cy="11" r="1.05" fill="#2b2b2b"/></svg>
<span class="t" id="t56" style="left:1786.50px;top:116.03px;font-size:15.2px;line-height:15.2px;color:#bbbbbb;">4</span>
<svg class="i" style="left:1805px;top:115px;" width="16" height="17" viewBox="0 0 16 17"><path d="M1.6 7.4L5.8 11.2L14.2 2.6" fill="none" stroke="#4fa35c" stroke-width="3.2"/><path d="M0.8 14.4l2.3 1.9 2.3-2.3 2.3 2.3 2.3-2.3 2.3 2.3 2.3-1.9" fill="none" stroke="#d1504c" stroke-width="1.1"/></svg>
<span class="t" id="t57" style="left:1824.40px;top:116.03px;font-size:15.2px;line-height:15.2px;color:#bbbbbb;">3</span>
<svg class="i" style="left:1845.5px;top:119px;" width="12" height="8" viewBox="0 0 12 8"><path d="M0.8 6.8L5.8 1.4L10.8 6.8" fill="none" stroke="#afb1b3" stroke-width="1.6"/></svg>
<svg class="i" style="left:1872px;top:119px;" width="12" height="8" viewBox="0 0 12 8"><path d="M0.8 1.2L5.8 6.6L10.8 1.2" fill="none" stroke="#afb1b3" stroke-width="1.6"/></svg>
<div class="b" style="left:1875px;top:270px;width:17px;height:3px;background:#c9a227;"></div>
<div class="b" style="left:1875px;top:291px;width:17px;height:3px;background:#c9a227;"></div>
<div class="b" style="left:1875px;top:338px;width:17px;height:3px;background:#c9a227;"></div>
<div class="b" style="left:1875px;top:359px;width:17px;height:3px;background:#c9a227;"></div>
<div class="b" style="left:1881px;top:406px;width:10px;height:95px;background:#595b5d;opacity:.55;"></div>
<div class="b" style="left:1875px;top:444px;width:17px;height:3px;background:#8a5a44;"></div>
<div class="b" style="left:27px;top:617px;width:1866px;height:1px;background:#2b2b2b;"></div>
<div class="b" style="left:28px;top:618px;width:1864px;height:33px;background:#3b4754;"></div>
<div class="b" style="left:28px;top:651px;width:1864px;height:1px;background:#323232;"></div>
<span class="t" id="t58" style="left:35.30px;top:627.56px;font-size:15.4px;line-height:15.4px;color:#bbbbbb;letter-spacing:0.517px;">Debug:</span>
<svg class="i" style="left:111.5px;top:626px;" width="20" height="20" viewBox="0 0 20 20"><rect x="3.6" y="0.9" width="13.8" height="11" fill="none" stroke="#5a6165" stroke-width="1.5"/><rect x="0.9" y="3.7" width="14.4" height="12.2" fill="#3c3f41" stroke="#6c7479" stroke-width="1.8"/><rect x="2.9" y="6.6" width="10.4" height="7" fill="#3a6378"/><circle cx="16.3" cy="16.3" r="3.2" fill="#1fd837" stroke="#3c3f41" stroke-width=".8"/></svg>
<span class="t" id="t59" style="left:135.90px;top:627.56px;font-size:15.4px;line-height:15.4px;color:#bbbbbb;letter-spacing:1.250px;">migong</span>
<svg class="i" style="left:203.5px;top:630.5px;" width="10" height="10" viewBox="0 0 10 10"><path d="M0.7 0.7L8.6 8.6M8.6 0.7L0.7 8.6" stroke="#7f8b96" stroke-width="1.1" fill="none"/></svg>
<div class="b" style="left:97px;top:648px;width:129.5px;height:3.5px;background:#4a88c7;border-radius:2px 2px 0 0;"></div>
<svg class="i" style="left:1835.5px;top:626.5px;" width="17" height="17" viewBox="0 0 17 17"><path fill="#afb1b3" fill-rule="evenodd" d="M6.39 2.88L6.45 0.46L10.55 0.46L10.61 2.88L12.31 3.86L14.44 2.70L16.49 6.26L14.42 7.52L14.42 9.48L16.49 10.74L14.44 14.30L12.31 13.14L10.61 14.12L10.55 16.54L6.45 16.54L6.39 14.12L4.69 13.14L2.56 14.30L0.51 10.74L2.58 9.48L2.58 7.52L0.51 6.26L2.56 2.70L4.69 3.86ZM5.90 8.50a2.6 2.6 0 1 0 5.2 0a2.6 2.6 0 1 0 -5.2 0Z"/></svg>
<div class="b" style="left:1868.3px;top:633.6px;width:15.4px;height:2.4px;background:#afb1b3;"></div>
<div class="b" style="left:62px;top:652px;width:1px;height:315px;background:#323232;"></div>
<svg class="i" style="left:37px;top:661px;" width="18" height="19" viewBox="0 0 18 19"><path d="M8.4 16.7A5.3 5.3 0 1 1 8.4 6.1H11" fill="none" stroke="#499c54" stroke-width="2.7"/><path d="M10.4 0.3L17.2 5.2L10.4 10Z" fill="#499c54"/><rect x="9.2" y="11.4" width="6.6" height="6.7" fill="#b4b6b8"/></svg>
<svg class="i" style="left:36.5px;top:693.5px;" width="18" height="18" viewBox="0 0 18 18"><path d="M1.8 16.2L10.8 7.2" stroke="#afb1b3" stroke-width="3.9" fill="none"/><circle cx="12.4" cy="5.8" r="5.1" fill="#afb1b3"/><path d="M12.6 5.6L19 -0.8" stroke="#3c3f41" stroke-width="3.6" fill="none"/></svg>
<div class="b" style="left:33px;top:723.5px;width:24px;height:1px;background:#555759;"></div>
<svg class="i" style="left:38px;top:735.5px;" width="16" height="15" viewBox="0 0 16 15"><rect x="0.7" y="0.8" width="4" height="13.6" fill="#499c54"/><path d="M6.8 0.6L15.8 7.6L6.8 14.6Z" fill="#499c54"/></svg>
<div class="b" style="left:40px;top:768.5px;width:4px;height:13.2px;background:#6a6d6f;"></div>
<div class="b" style="left:46.8px;top:768.5px;width:4px;height:13.2px;background:#6a6d6f;"></div>
<div class="b" style="left:39px;top:803px;width:12.5px;height:12.5px;background:#c75450;"></div>
<div class="b" style="left:33px;top:829px;width:24px;height:1px;background:#555759;"></div>
<svg class="i" style="left:37px;top:841px;" width="17" height="17" viewBox="0 0 17 17"><circle cx="10.8" cy="6" r="5.6" fill="#c9544f"/><circle cx="6" cy="11" r="5.6" fill="#c9544f" stroke="#3c3f41" stroke-width="1.1"/></svg>
<svg class="i" style="left:37px;top:875px;" width="16" height="16" viewBox="0 0 16 16"><circle cx="7.8" cy="8" r="6.2" fill="#c9544f"/><path d="M0.6 14.4L15 0.8" stroke="#3c3f41" stroke-width="3.4"/><path d="M0.6 14.4L15 0.8" stroke="#afb1b3" stroke-width="1.5"/></svg>
<div class="b" style="left:33px;top:903px;width:24px;height:1px;background:#555759;"></div>
<svg class="i" style="left:36px;top:916px;" width="18" height="16" viewBox="0 0 18 16"><path d="M0 3.4H4.6L6 0.8H12L13.4 3.4H18V15.6H0Z" fill="#afb1b3"/><circle cx="9" cy="9.4" r="3.9" fill="#3c3f41"/><circle cx="9" cy="9.4" r="2.1" fill="#afb1b3"/></svg>
<span class="t" id="t60" style="left:41.30px;top:947.45px;font-size:14px;line-height:14px;color:#bbbbbb;">»</span>
<div class="b" style="left:63px;top:687.4px;width:1829px;height:1px;background:#323232;"></div>
<span class="t" id="t61" style="left:80.40px;top:664.63px;font-size:13.2px;line-height:13.2px;color:#bbbbbb;letter-spacing:0.438px;">Debugger</span>
<svg class="i" style="left:164.5px;top:671px;" width="10" height="10" viewBox="0 0 10 10"><circle cx="5" cy="5" r="4.8" fill="#f0a732"/><path d="M5 1.8V7.4M2.6 5.2L5 7.6L7.4 5.2" fill="none" stroke="#3c3f41" stroke-width="1.2"/></svg>
<span class="t" id="t62" style="left:174.30px;top:664.63px;font-size:13.2px;line-height:13.2px;color:#bbbbbb;letter-spacing:0.086px;">Console</span>
<div class="b" style="left:246px;top:664px;width:15.8px;height:2.5px;background:#afb1b3;"></div>
<div class="b" style="left:246px;top:668.3px;width:15.8px;height:4.3px;background:#3a94cf;"></div>
<div class="b" style="left:246px;top:674.8px;width:15.8px;height:2.7px;background:#afb1b3;"></div>
<div class="b" style="left:274px;top:658px;width:1px;height:24px;background:#555759;"></div>
<svg class="i" style="left:286px;top:661px;" width="18" height="18" viewBox="0 0 18 18"><path d="M1.4 9.6L7.6 2.6L12.6 7.6" fill="none" stroke="#3a9ad6" stroke-width="2.1"/><path d="M9.4 11.2H17V3.4Z" fill="#3a9ad6"/><rect x="1.4" y="14" width="15.4" height="2.6" fill="#afb1b3"/></svg>
<svg class="i" style="left:320px;top:661px;" width="16" height="18" viewBox="0 0 16 18"><path d="M8 0V8" stroke="#3a9ad6" stroke-width="2.3"/><path d="M2.4 6.6H13.6L8 12.4Z" fill="#3a9ad6"/><rect x="0.2" y="14" width="15.6" height="2.6" fill="#afb1b3"/></svg>
<svg class="i" style="left:352px;top:661px;" width="16" height="18" viewBox="0 0 16 18"><path d="M8 5V13.2" stroke="#3a9ad6" stroke-width="2.3"/><path d="M2.4 6.6H13.6L8 0.6Z" fill="#3a9ad6"/><rect x="0.3" y="14" width="15.6" height="2.6" fill="#afb1b3"/></svg>
<svg class="i" style="left:385px;top:661px;" width="18" height="19" viewBox="0 0 18 19"><path d="M0.8 2.2L6.6 8" stroke="#3a9ad6" stroke-width="2.4"/><path d="M1.8 10.2H10V2.4Z" fill="#3a9ad6"/><path d="M10.6 8.2H17M10.6 17.6H17M13.8 8.2V17.6" stroke="#afb1b3" stroke-width="1.3" fill="none"/></svg>
<div class="b" style="left:413px;top:658px;width:1px;height:24px;background:#555759;"></div>
<svg class="i" style="left:426px;top:662px;" width="16" height="16" viewBox="0 0 16 16"><rect x="0.9" y="0.9" width="14.2" height="14" fill="none" stroke="#afb1b3" stroke-width="1.8"/><rect x="0.9" y="0.9" width="14.2" height="3.6" fill="#afb1b3"/><path d="M0.9 8.2H15.1M0.9 11.6H15.1M5.7 4.6V14.8M10.3 4.6V14.8" stroke="#afb1b3" stroke-width="1.3"/></svg>
<svg class="i" style="left:458px;top:663.5px;" width="16" height="13" viewBox="0 0 16 13"><path d="M0 1.2H5.4M0 6.4H4.4M0 11.6H5.4M10.2 1.2H15.8M11.4 6.4H15.8M10.2 11.6H15.8" stroke="#5c5f61" stroke-width="1.8"/><path d="M5.4 11.6C8.6 11.6 7.2 1.2 10.2 1.2" stroke="#5c5f61" stroke-width="1.3" fill="none"/></svg>
<svg class="i" style="left:1870px;top:664px;" width="19" height="17" viewBox="0 0 19 17"><rect x="0" y="0" width="6.6" height="5.6" fill="#afb1b3"/><rect x="8" y="0" width="8" height="5.6" fill="#afb1b3"/><rect x="0" y="7" width="16" height="5.6" fill="#afb1b3"/><path d="M12.6 13.4H18.6L15.6 16.6Z" fill="#afb1b3"/></svg>
<span class="t" id="t63" style="left:80.40px;top:701.93px;font-size:13.2px;line-height:13.2px;color:#bbbbbb;letter-spacing:-0.083px;">Frames</span>
<span class="t" id="t64" style="left:155.90px;top:701.93px;font-size:13.2px;line-height:13.2px;color:#bbbbbb;letter-spacing:0.143px;">Threads</span>
<div class="b" style="left:63px;top:723.4px;width:339px;height:1px;background:#323232;"></div>
<div class="b" style="left:402px;top:689px;width:1px;height:278px;background:#323232;"></div>
<svg class="i" style="left:76.5px;top:733.5px;" width="18" height="15" viewBox="0 0 18 15"><path d="M1.4 7.6L6.6 12.8L16.6 1.4" fill="none" stroke="#c8642a" stroke-width="3.1"/></svg>
<span class="t" id="t65" style="left:99.90px;top:734.96px;font-size:15.4px;line-height:15.4px;color:#bbbbbb;letter-spacing:0.231px;">&quot;main&quot;@1 in g...ain&quot;: RUNNING</span>
<div class="b" style="left:338.5px;top:727.5px;width:28px;height:26px;background:#5a5e60;border-radius:4px;"></div>
<svg class="i" style="left:345px;top:733px;" width="15" height="15" viewBox="0 0 15 15"><path d="M0.4 0.6H14.6L9.4 7V14.4H5.6V7Z" fill="#dcdcdc"/></svg>
<svg class="i" style="left:379.5px;top:738px;" width="11" height="7" viewBox="0 0 11 7"><path d="M0.2 0.3h10.4L5.4 6.6Z" fill="#afb1b3"/></svg>
<div class="b" style="left:63.5px;top:760px;width:333.5px;height:26.2px;background:#4b6eaf;"></div>
<svg class="i" style="left:74.5px;top:765px;" width="16" height="15" viewBox="0 0 16 15"><path d="M5.4 1L1.2 5.2L5.4 9.4" fill="none" stroke="#e8e8e8" stroke-width="1.5"/><path d="M1.6 5.2H9.6A4.4 4.4 0 0 1 9.6 14H5" fill="none" stroke="#e8e8e8" stroke-width="1.5"/></svg>
<span class="t" id="t66" style="left:96.20px;top:765.86px;font-size:15.4px;line-height:15.4px;color:#d0d4dc;letter-spacing:0.331px;">findWay:59, T</span>
<span class="t" id="t67" style="left:199.40px;top:765.86px;font-size:15.4px;line-height:15.4px;color:#b9c3d9;font-style:italic;letter-spacing:0.543px;">(com.atguigu.recursion)</span>
<span class="t" id="t68" style="left:378.00px;top:765.86px;font-size:15.4px;line-height:15.4px;color:#c9d0de;font-weight:bold;letter-spacing:-0.100px;">[3]</span>
<span class="t" id="t69" style="left:96.20px;top:791.76px;font-size:15.4px;line-height:15.4px;color:#bbbbbb;letter-spacing:0.331px;">findWay:69, T</span>
<span class="t" id="t70" style="left:199.40px;top:791.76px;font-size:15.4px;line-height:15.4px;color:#8c8c8c;font-style:italic;letter-spacing:0.543px;">(com.atguigu.recursion)</span>
<span class="t" id="t71" style="left:378.00px;top:791.76px;font-size:15.4px;line-height:15.4px;color:#d8d8d8;font-weight:bold;letter-spacing:-0.100px;">[2]</span>
<span class="t" id="t72" style="left:96.20px;top:817.46px;font-size:15.4px;line-height:15.4px;color:#bbbbbb;letter-spacing:0.331px;">findWay:67, T</span>
<span class="t" id="t73" style="left:199.40px;top:817.46px;font-size:15.4px;line-height:15.4px;color:#8c8c8c;font-style:italic;letter-spacing:0.543px;">(com.atguigu.recursion)</span>
<span class="t" id="t74" style="left:378.00px;top:817.46px;font-size:15.4px;line-height:15.4px;color:#d8d8d8;font-weight:bold;letter-spacing:-0.100px;">[1]</span>
<span class="t" id="t75" style="left:96.20px;top:844.46px;font-size:15.4px;line-height:15.4px;color:#bbbbbb;letter-spacing:0.527px;">main:34, migong</span>
<span class="t" id="t76" style="left:222.90px;top:844.46px;font-size:15.4px;line-height:15.4px;color:#8c8c8c;font-style:italic;letter-spacing:0.565px;">(com.atguigu.recursion)</span>
<div class="b" style="left:64px;top:927.5px;width:332px;height:9.5px;background:#595b5d;"></div>
<span class="t" id="t77" style="left:74.30px;top:947.53px;font-size:13.2px;line-height:13.2px;color:#8c8c8c;letter-spacing:0.331px;">Switch frames from anywhere in the IDE with Ct..</span>
<svg class="i" style="left:383.3px;top:948.5px;" width="10" height="10" viewBox="0 0 10 10"><path d="M0.7 0.7L8.6 8.6M8.6 0.7L0.7 8.6" stroke="#7a7e80" stroke-width="1.1" fill="none"/></svg>
<div class="b" style="left:64px;top:686px;width:93px;height:3px;background:#4a88c7;"></div>
<div class="b" style="left:64px;top:721.5px;width:77px;height:3px;background:#4a88c7;"></div>
<div class="b" style="left:54px;top:752.8px;width:347.4px;height:38.4px;background:transparent;border:4px solid #f8231b;border-radius:6px;box-sizing:border-box;"></div>
<div class="b" style="left:404px;top:688.4px;width:1217px;height:35px;background:#45494a;"></div>
<div class="b" style="left:404px;top:723.4px;width:1217px;height:1px;background:#323232;"></div>
<span class="t m" style="left:413.3px;top:699.09px;font-size:14.9px;line-height:14.9px;color:#787878;">Evaluate expression (Enter) or add a watch (Ctrl+Shift+Enter)</span>
<svg class="i" style="left:1565px;top:698.6px;" width="17" height="17" viewBox="0 0 17 17"><path d="M6 0V12M0 6H12" stroke="#606365" stroke-width="1.7"/><circle cx="8.4" cy="14" r="1.9" fill="none" stroke="#606365" stroke-width="1"/><circle cx="13.6" cy="14" r="1.9" fill="none" stroke="#606365" stroke-width="1"/></svg>
<svg class="i" style="left:1597.6px;top:703px;" width="11" height="7" viewBox="0 0 11 7"><path d="M0.2 0.3h10.4L5.4 6.6Z" fill="#afb1b3"/></svg>
<div class="b" style="left:404px;top:825px;width:1217px;height:25px;background:#0d293e;"></div>
<svg class="i" style="left:415.0px;top:731.4px;" width="7" height="11" viewBox="0 0 7 11"><path d="M0.8 0.8L5.6 5.4L0.8 10" fill="none" stroke="#b6b8ba" stroke-width="1.5"/></svg>
<div class="b" style="left:438px;top:730.5px;width:12.3px;height:3.4px;background:#b5903c;"></div>
<div class="b" style="left:438px;top:735.6px;width:12.3px;height:3.4px;background:#b5903c;"></div>
<div class="b" style="left:438px;top:740.7px;width:12.3px;height:3.4px;background:#b5903c;"></div>
<span class="t" id="t78" style="left:458.65px;top:730.76px;font-size:15.4px;line-height:15.4px;color:#ef8078;letter-spacing:0.438px;">this</span>
<span class="t" id="t79" style="left:489.30px;top:730.76px;font-size:15.4px;line-height:15.4px;color:#bbbbbb;">=</span>
<span class="t" id="t80" style="left:503.90px;top:730.76px;font-size:15.4px;line-height:15.4px;color:#858585;letter-spacing:-0.036px;">{T@502}</span>
<svg class="i" style="left:415.0px;top:756.4px;" width="7" height="11" viewBox="0 0 7 11"><path d="M0.8 0.8L5.6 5.4L0.8 10" fill="none" stroke="#b6b8ba" stroke-width="1.5"/></svg>
<svg class="i" style="left:435px;top:754px;" width="18" height="18" viewBox="0 0 18 18"><circle cx="9" cy="9" r="8.9" fill="#b88c3c"/></svg>
<span class="t" id="t81" style="left:440.30px;top:755.53px;font-size:14.5px;line-height:14.5px;color:#4a4032;">p</span>
<span class="t" id="t82" style="left:458.90px;top:755.76px;font-size:15.4px;line-height:15.4px;color:#ef8078;letter-spacing:0.533px;">map</span>
<span class="t" id="t83" style="left:495.80px;top:755.76px;font-size:15.4px;line-height:15.4px;color:#bbbbbb;">=</span>
<span class="t" id="t84" style="left:509.90px;top:755.76px;font-size:15.4px;line-height:15.4px;color:#858585;letter-spacing:0.386px;">{int[8][]@500}</span>
<svg class="i" style="left:435px;top:779px;" width="18" height="18" viewBox="0 0 18 18"><circle cx="9" cy="9" r="8.9" fill="#b88c3c"/></svg>
<span class="t" id="t85" style="left:440.30px;top:780.53px;font-size:14.5px;line-height:14.5px;color:#4a4032;">p</span>
<span class="t" id="t86" style="left:458.90px;top:780.76px;font-size:15.4px;line-height:15.4px;color:#ef8078;">i</span>
<span class="t" id="t87" style="left:467.65px;top:780.76px;font-size:15.4px;line-height:15.4px;color:#bbbbbb;letter-spacing:0.283px;">= 2</span>
<svg class="i" style="left:435px;top:804px;" width="18" height="18" viewBox="0 0 18 18"><circle cx="9" cy="9" r="8.9" fill="#b88c3c"/></svg>
<span class="t" id="t88" style="left:440.30px;top:805.53px;font-size:14.5px;line-height:14.5px;color:#4a4032;">p</span>
<span class="t" id="t89" style="left:457.20px;top:805.76px;font-size:15.4px;line-height:15.4px;color:#ef8078;">j</span>
<span class="t" id="t90" style="left:467.65px;top:805.76px;font-size:15.4px;line-height:15.4px;color:#bbbbbb;letter-spacing:0.283px;">= 2</span>
<svg class="i" style="left:434px;top:833.7px;" width="20" height="10" viewBox="0 0 20 10"><circle cx="4.8" cy="5.2" r="3.9" fill="none" stroke="#9aa7b0" stroke-width="1.7"/><circle cx="15" cy="5.2" r="3.9" fill="none" stroke="#9aa7b0" stroke-width="1.7"/><path d="M0.2 2.6H19.6" stroke="#9aa7b0" stroke-width="1.5"/></svg>
<span class="t" id="t91" style="left:458.50px;top:830.76px;font-size:15.4px;line-height:15.4px;color:#5a9df3;letter-spacing:0.600px;">map[i][j]</span>
<span class="t" id="t92" style="left:523.30px;top:830.76px;font-size:15.4px;line-height:15.4px;color:#bbbbbb;letter-spacing:-0.267px;">= 1</span>
<svg class="i" style="left:434px;top:858.7px;" width="20" height="10" viewBox="0 0 20 10"><circle cx="4.8" cy="5.2" r="3.9" fill="none" stroke="#9aa7b0" stroke-width="1.7"/><circle cx="15" cy="5.2" r="3.9" fill="none" stroke="#9aa7b0" stroke-width="1.7"/><path d="M0.2 2.6H19.6" stroke="#9aa7b0" stroke-width="1.5"/></svg>
<span class="t" id="t93" style="left:458.50px;top:855.76px;font-size:15.4px;line-height:15.4px;color:#ef8078;letter-spacing:0.622px;">map[6][5]</span>
<span class="t" id="t94" style="left:533.40px;top:855.76px;font-size:15.4px;line-height:15.4px;color:#bbbbbb;letter-spacing:0.367px;">= 0</span>
<svg class="i" style="left:415.0px;top:881.4px;" width="7" height="11" viewBox="0 0 7 11"><path d="M0.8 0.8L5.6 5.4L0.8 10" fill="none" stroke="#b6b8ba" stroke-width="1.5"/></svg>
<svg class="i" style="left:434px;top:883.7px;" width="20" height="10" viewBox="0 0 20 10"><circle cx="4.8" cy="5.2" r="3.9" fill="none" stroke="#9aa7b0" stroke-width="1.7"/><circle cx="15" cy="5.2" r="3.9" fill="none" stroke="#9aa7b0" stroke-width="1.7"/><path d="M0.2 2.6H19.6" stroke="#9aa7b0" stroke-width="1.5"/></svg>
<span class="t" id="t95" style="left:458.50px;top:880.76px;font-size:15.4px;line-height:15.4px;color:#ef8078;letter-spacing:0.600px;">map[i]</span>
<span class="t" id="t96" style="left:509.40px;top:880.76px;font-size:15.4px;line-height:15.4px;color:#bbbbbb;">=</span>
<span class="t" id="t97" style="left:523.30px;top:880.76px;font-size:15.4px;line-height:15.4px;color:#858585;letter-spacing:0.417px;">{int[7]@506}</span>
<span class="t" id="t98" style="left:618.60px;top:880.76px;font-size:15.4px;line-height:15.4px;color:#bbbbbb;letter-spacing:-0.019px;">[1, 2, 1, 0, 0, 0, 1]</span>
<svg class="i" style="left:415.0px;top:906.4px;" width="7" height="11" viewBox="0 0 7 11"><path d="M0.8 0.8L5.6 5.4L0.8 10" fill="none" stroke="#b6b8ba" stroke-width="1.5"/></svg>
<svg class="i" style="left:434px;top:908.7px;" width="20" height="10" viewBox="0 0 20 10"><circle cx="4.8" cy="5.2" r="3.9" fill="none" stroke="#9aa7b0" stroke-width="1.7"/><circle cx="15" cy="5.2" r="3.9" fill="none" stroke="#9aa7b0" stroke-width="1.7"/><path d="M0.2 2.6H19.6" stroke="#9aa7b0" stroke-width="1.5"/></svg>
<span class="t" id="t99" style="left:458.50px;top:905.76px;font-size:15.4px;line-height:15.4px;color:#ef8078;letter-spacing:0.667px;">map[6]</span>
<span class="t" id="t100" style="left:514.40px;top:905.76px;font-size:15.4px;line-height:15.4px;color:#bbbbbb;">=</span>
<span class="t" id="t101" style="left:528.90px;top:905.76px;font-size:15.4px;line-height:15.4px;color:#858585;letter-spacing:0.417px;">{int[7]@501}</span>
<span class="t" id="t102" style="left:623.70px;top:905.76px;font-size:15.4px;line-height:15.4px;color:#bbbbbb;letter-spacing:-0.024px;">[1, 0, 0, 0, 0, 0, 1]</span>
<div class="b" style="left:417px;top:773.4px;width:194px;height:81.6px;background:transparent;border:4px solid #f8231b;border-radius:6px;box-sizing:border-box;"></div>
<div class="b" style="left:1621px;top:689px;width:1px;height:278px;background:#323232;"></div>
<span class="t" id="t103" style="left:1639.50px;top:702.03px;font-size:13.2px;line-height:13.2px;color:#bbbbbb;letter-spacing:0.667px;">Memory</span>
<span class="t" id="t104" style="left:1723.20px;top:702.03px;font-size:13.2px;line-height:13.2px;color:#bbbbbb;letter-spacing:0.275px;">Overhead</span>
<div class="b" style="left:1622px;top:723.4px;width:270px;height:1px;background:#323232;"></div>
<div class="b" style="left:1622px;top:721.5px;width:85px;height:2.8px;background:#9a9c9e;"></div>
<div class="b" style="left:1627px;top:728px;width:230px;height:29.5px;background:#45494a;border:1px solid #646668;border-radius:4px;box-sizing:border-box;"></div>
<svg class="i" style="left:1636px;top:735px;" width="16" height="16" viewBox="0 0 16 16"><circle cx="6.6" cy="6.6" r="5.4" fill="none" stroke="#9c9ea0" stroke-width="1.3"/><path d="M10.6 10.6L15 15" stroke="#9c9ea0" stroke-width="1.5"/></svg>
<svg class="i" style="left:1867.5px;top:734.6px;" width="20" height="19" viewBox="0 0 20 19"><path fill="#afb1b3" fill-rule="evenodd" d="M6.39 2.88L6.45 0.46L10.55 0.46L10.61 2.88L12.31 3.86L14.44 2.70L16.49 6.26L14.42 7.52L14.42 9.48L16.49 10.74L14.44 14.30L12.31 13.14L10.61 14.12L10.55 16.54L6.45 16.54L6.39 14.12L4.69 13.14L2.56 14.30L0.51 10.74L2.58 9.48L2.58 7.52L0.51 6.26L2.56 2.70L4.69 3.86ZM5.90 8.50a2.6 2.6 0 1 0 5.2 0a2.6 2.6 0 1 0 -5.2 0Z"/><path d="M12.6 14.8H19.6L16.1 18.4Z" fill="#afb1b3" stroke="#3c3f41" stroke-width=".9"/></svg>
<div class="b" style="left:1622px;top:761px;width:270px;height:30px;background:#43474a;"></div>
<div class="b" style="left:1622px;top:791px;width:270px;height:1px;background:#323232;"></div>
<div class="b" style="left:1692.5px;top:762px;width:2px;height:28px;background:#36393b;"></div>
<div class="b" style="left:1792.5px;top:762px;width:2px;height:28px;background:#36393b;"></div>
<span class="t" id="t105" style="left:1633.60px;top:769.96px;font-size:15.4px;line-height:15.4px;color:#bbbbbb;letter-spacing:-0.400px;">Class</span>
<span class="t" id="t106" style="left:1702.90px;top:769.96px;font-size:15.4px;line-height:15.4px;color:#bbbbbb;letter-spacing:0.700px;">Count</span>
<span class="t" id="t107" style="left:1803.50px;top:769.96px;font-size:15.4px;line-height:15.4px;color:#bbbbbb;letter-spacing:0.700px;">Diff</span>
<svg class="i" style="left:1838px;top:773px;" width="11" height="7" viewBox="0 0 11 7"><path d="M0.2 0.3h10.4L5.4 6.6Z" fill="#afb1b3"/></svg>
<span class="t" id="t108" style="left:1640.30px;top:846.66px;font-size:15.4px;line-height:15.4px;color:#8c8c8c;letter-spacing:0.272px;">No classes loaded.</span>
<span class="t" id="t109" style="left:1779.30px;top:846.66px;font-size:15.4px;line-height:15.4px;color:#589df6;letter-spacing:-0.008px;">Load classes</span>
<div class="b" style="left:0px;top:966.5px;width:1920px;height:1px;background:#323232;"></div>
<div class="b" style="left:241.5px;top:967.5px;width:87px;height:27px;background:#2d2f30;"></div>
<div class="b" style="left:0px;top:994.5px;width:1920px;height:1px;background:#323232;"></div>
<svg class="i" style="left:42.7px;top:975px;" width="12" height="15" viewBox="0 0 12 15"><circle cx="2.8" cy="2.6" r="2.3" fill="#afb1b3"/><circle cx="9.6" cy="4" r="2.3" fill="#afb1b3"/><path d="M2.8 2.6V14.6M2.8 10.6C7.6 10.6 9.6 8.6 9.6 4" fill="none" stroke="#afb1b3" stroke-width="1.8"/></svg>
<span class="t" id="t110" style="left:63.30px;top:976.93px;font-size:13.2px;line-height:13.2px;color:#bbbbbb;letter-spacing:0.440px;">Version Control</span>
<svg class="i" style="left:187px;top:976px;" width="11" height="12" viewBox="0 0 11 12"><path d="M0.3 0.2L10.6 6L0.3 11.8Z" fill="#afb1b3"/></svg>
<span class="t" id="t111" style="left:205.90px;top:976.93px;font-size:13.2px;line-height:13.2px;color:#bbbbbb;letter-spacing:0.233px;">Run</span>
<svg class="i" style="left:255px;top:973.5px;" width="15" height="15" viewBox="0 0 17.5 17.5"><path d="M5.4 4L3.4 0.9M11.6 4L13.6 0.9M0.8 6.2L4 8M16.2 6.2L13 8M0.2 10.6H4M16.8 10.6H13M0.8 15.4L4 13.2M16.2 15.4L13 13.2" stroke="#afb1b3" stroke-width="1.9" fill="none"/><ellipse cx="8.5" cy="10.4" rx="5.3" ry="6.4" fill="#afb1b3"/><path d="M4.6 4.8a3.9 3.4 0 0 1 7.8 0Z" fill="#afb1b3"/><path d="M5.4 8.2H11.6M5.4 11.8H11.6" stroke="#2d2f30" stroke-width="1.3"/><circle cx="15" cy="15" r="2.8" fill="#1fd837" stroke="#2d2f30" stroke-width=".9"/></svg>
<span class="t" id="t112" style="left:275.50px;top:976.93px;font-size:13.2px;line-height:13.2px;color:#ffffff;letter-spacing:0.380px;">Debug</span>
<svg class="i" style="left:343px;top:976px;" width="14" height="11" viewBox="0 0 14 11"><path d="M0 1.2H2.2M4 1.2H14M0 5.5H2.2M4 5.5H14M0 9.8H2.2M4 9.8H14" stroke="#afb1b3" stroke-width="2"/></svg>
<span class="t" id="t113" style="left:362.90px;top:976.93px;font-size:13.2px;line-height:13.2px;color:#bbbbbb;letter-spacing:0.500px;">TODO</span>
<svg class="i" style="left:427.5px;top:974.5px;" width="14" height="14" viewBox="0 0 14 14"><circle cx="6.8" cy="6.8" r="6.6" fill="#afb1b3"/><path d="M6.8 3V7.8" stroke="#3c3f41" stroke-width="1.8"/><circle cx="6.8" cy="10.4" r="1.1" fill="#3c3f41"/></svg>
<span class="t" id="t114" style="left:447.90px;top:976.93px;font-size:13.2px;line-height:13.2px;color:#bbbbbb;letter-spacing:0.250px;">Problems</span>
<svg class="i" style="left:531.5px;top:975px;" width="15" height="13" viewBox="0 0 15 13"><rect x="0" y="0" width="15" height="13" fill="#afb1b3"/><path d="M2.4 2.8L6 5.6L2.4 8.4" fill="none" stroke="#3c3f41" stroke-width="1.4"/><path d="M7 9.8H12" stroke="#3c3f41" stroke-width="1.4"/></svg>
<span class="t" id="t115" style="left:552.90px;top:976.93px;font-size:13.2px;line-height:13.2px;color:#bbbbbb;letter-spacing:0.375px;">Terminal</span>
<svg class="i" style="left:629px;top:974px;" width="17" height="16" viewBox="0 0 17 16"><circle cx="6.8" cy="6.8" r="5.8" fill="none" stroke="#afb1b3" stroke-width="1.7"/><path d="M6.8 3.4V7.2H9.6" fill="none" stroke="#afb1b3" stroke-width="1.4"/><path d="M8.4 6.4L16.4 11L8.4 15.6Z" fill="#afb1b3" stroke="#3c3f41" stroke-width="1"/></svg>
<span class="t" id="t116" style="left:649.90px;top:976.93px;font-size:13.2px;line-height:13.2px;color:#bbbbbb;letter-spacing:0.375px;">Profiler</span>
<svg class="i" style="left:720px;top:974.5px;" width="16" height="14" viewBox="0 0 16 14"><path d="M4.4 0H11.6L16 7L11.6 14H4.4L0 7Z" fill="#afb1b3"/><path d="M6.2 3.8L11.4 7L6.2 10.2Z" fill="#3c3f41"/></svg>
<span class="t" id="t117" style="left:740.90px;top:976.93px;font-size:13.2px;line-height:13.2px;color:#bbbbbb;letter-spacing:0.000px;">Services</span>
<svg class="i" style="left:815px;top:974px;" width="16" height="16" viewBox="0 0 16 16"><path d="M6 4.2L14.6 12.8" stroke="#afb1b3" stroke-width="2.9" fill="none"/><path d="M1 6.6L8 0L9.8 1.8L3.8 9Z" fill="#afb1b3"/></svg>
<span class="t" id="t118" style="left:835.90px;top:976.93px;font-size:13.2px;line-height:13.2px;color:#bbbbbb;letter-spacing:0.400px;">Build</span>
<svg class="i" style="left:15px;top:1000.5px;" width="16" height="16" viewBox="0 0 16 16"><rect x="0.7" y="3" width="12" height="12" fill="none" stroke="#afb1b3" stroke-width="1.3"/><path d="M3.2 0.7H15.2V12.7" fill="none" stroke="#afb1b3" stroke-width="1.3"/></svg>
<span class="t" id="t119" style="left:1628.70px;top:999.96px;font-size:15.4px;line-height:15.4px;color:#bbbbbb;letter-spacing:0.050px;">59:1</span>
<span class="t" id="t120" style="left:1673.90px;top:999.96px;font-size:15.4px;line-height:15.4px;color:#bbbbbb;letter-spacing:-0.750px;">CRLF</span>
<span class="t" id="t121" style="left:1724.90px;top:999.96px;font-size:15.4px;line-height:15.4px;color:#bbbbbb;letter-spacing:-0.100px;">UTF-8</span>
<span class="t" id="t122" style="left:1782.90px;top:999.96px;font-size:15.4px;line-height:15.4px;color:#bbbbbb;letter-spacing:0.062px;">4 spaces</span>
<svg class="i" style="left:1858.5px;top:1000px;" width="16" height="15" viewBox="0 0 16 15"><rect x="5" y="7" width="10" height="7.6" fill="#afb1b3"/><path d="M1.2 7V4.6a3 3 0 0 1 6 0V7.4" fill="none" stroke="#afb1b3" stroke-width="1.7"/></svg>
<svg class="i" style="left:1890px;top:1000.3px;" width="16" height="16" viewBox="0 0 16 16"><circle cx="7.8" cy="7.8" r="7.6" fill="#afb1b3"/><path d="M7.8 3.4V9" stroke="#3c3f41" stroke-width="2.2"/><circle cx="7.8" cy="11.9" r="1.3" fill="#3c3f41"/></svg>
<div class="b" style="left:0px;top:1020px;width:1920px;height:9px;background:#e6e4ea;background:linear-gradient(90deg,#e3e4f0 0%,#e3e4f0 12%,#f2e4e3 17%,#f1e4de 23%,#e5e1dd 26.5%,#e9dfdb 36%,#ecdfdc 49%,#e4e0df 52.5%,#dfdddd 62%,#dfdfe9 73%,#f0e2e6 80%,#e0e0ee 86%,#dfe0ee 100%);"></div>
<div class="b" style="left:940px;top:1026px;width:48px;height:6px;background:#f2a7a0;border-radius:5px;"></div>
<div class="b" style="left:1105px;top:1027px;width:47px;height:6px;background:#f4f3f6;border-radius:5px;"></div>
</div></body></html>
